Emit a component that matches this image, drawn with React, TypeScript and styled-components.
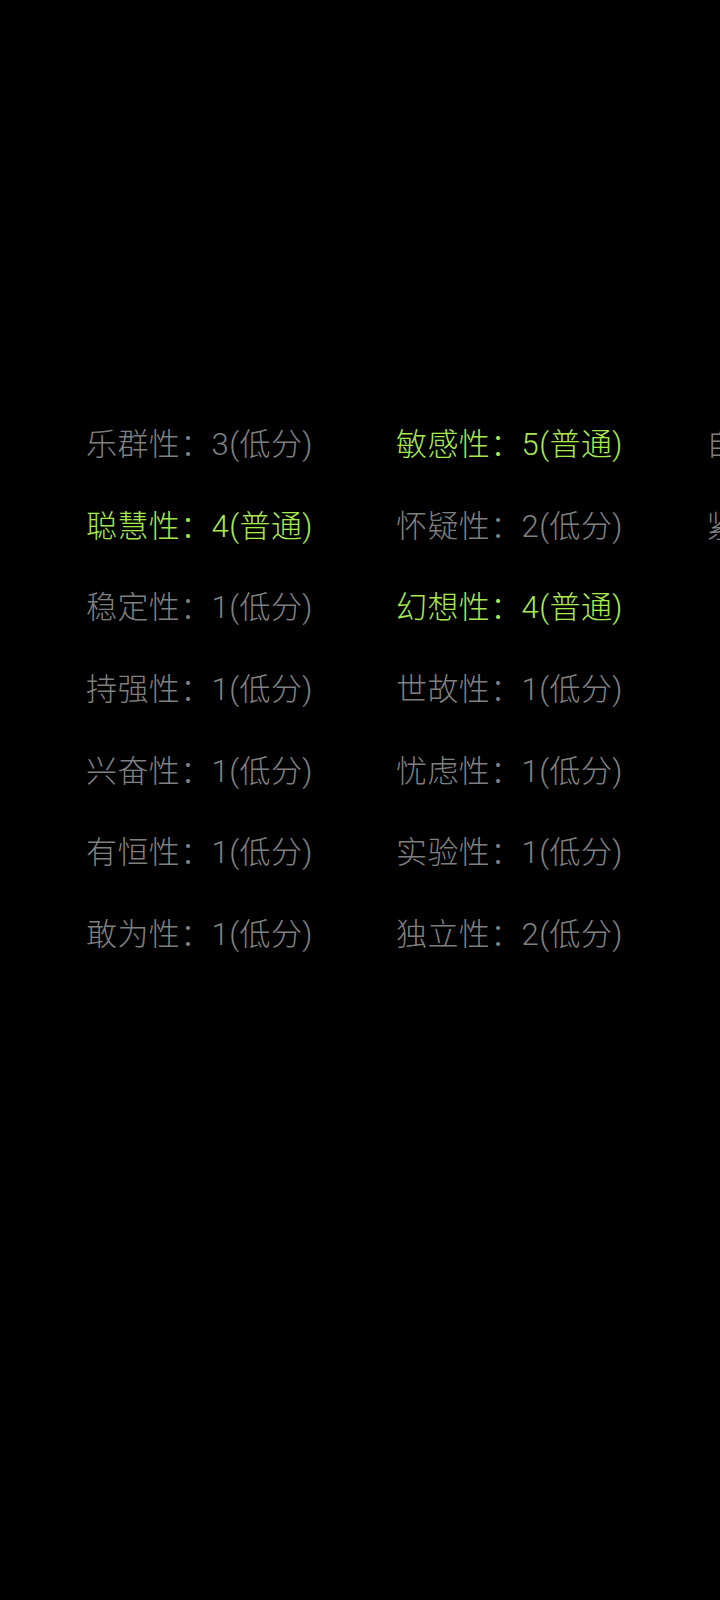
import React from "react";
import styled, { createGlobalStyle } from "styled-components";

type Factor = { name: string; score: number };

const FACTORS: Factor[] = [
  { name: "乐群性", score: 3 },
  { name: "聪慧性", score: 4 },
  { name: "稳定性", score: 1 },
  { name: "持强性", score: 1 },
  { name: "兴奋性", score: 1 },
  { name: "有恒性", score: 1 },
  { name: "敢为性", score: 1 },
  { name: "敏感性", score: 5 },
  { name: "怀疑性", score: 2 },
  { name: "幻想性", score: 4 },
  { name: "世故性", score: 1 },
  { name: "忧虑性", score: 1 },
  { name: "实验性", score: 1 },
  { name: "独立性", score: 2 },
  { name: "自律性", score: 2 },
  { name: "紧张性", score: 2 },
];

const levelOf = (score: number) => (score >= 4 && score <= 7 ? "普通" : score < 4 ? "低分" : "高分");

const GlobalStyle = createGlobalStyle`
  html, body {
    margin: 0;
    padding: 0;
    background: #000;
    width: 720px;
    overflow: hidden;
  }
`;

const App: React.FC = () => {
  return (
    <>
      <GlobalStyle />
      <Screen>
        <FactorGrid>
          {FACTORS.map((f) => {
            const level = levelOf(f.score);
            return (
              <FactorItem key={f.name} $highlight={level === "普通"}>
                {f.name}：{f.score}({level})
              </FactorItem>
            );
          })}
        </FactorGrid>
      </Screen>
    </>
  );
};

export default App;

const Screen = styled.div`
  width: 720px;
  min-height: 1600px;
  background: #000;
  box-sizing: border-box;
  padding: 401px 0 0 86px;
  overflow: hidden;
`;

const FactorGrid = styled.div`
  display: grid;
  grid-auto-flow: column;
  grid-template-rows: repeat(7, 81.6px);
  grid-auto-columns: 310px;
  width: max-content;
`;

const FactorItem = styled.div<{ $highlight: boolean }>`
  display: flex;
  align-items: center;
  white-space: nowrap;
  font-family: Roboto, "Noto Sans CJK SC", sans-serif;
  font-size: 31px;
  font-weight: 300;
  letter-spacing: 0.4px;
  color: ${(p) => (p.$highlight ? "#a8e84f" : "#808080")};
`;
